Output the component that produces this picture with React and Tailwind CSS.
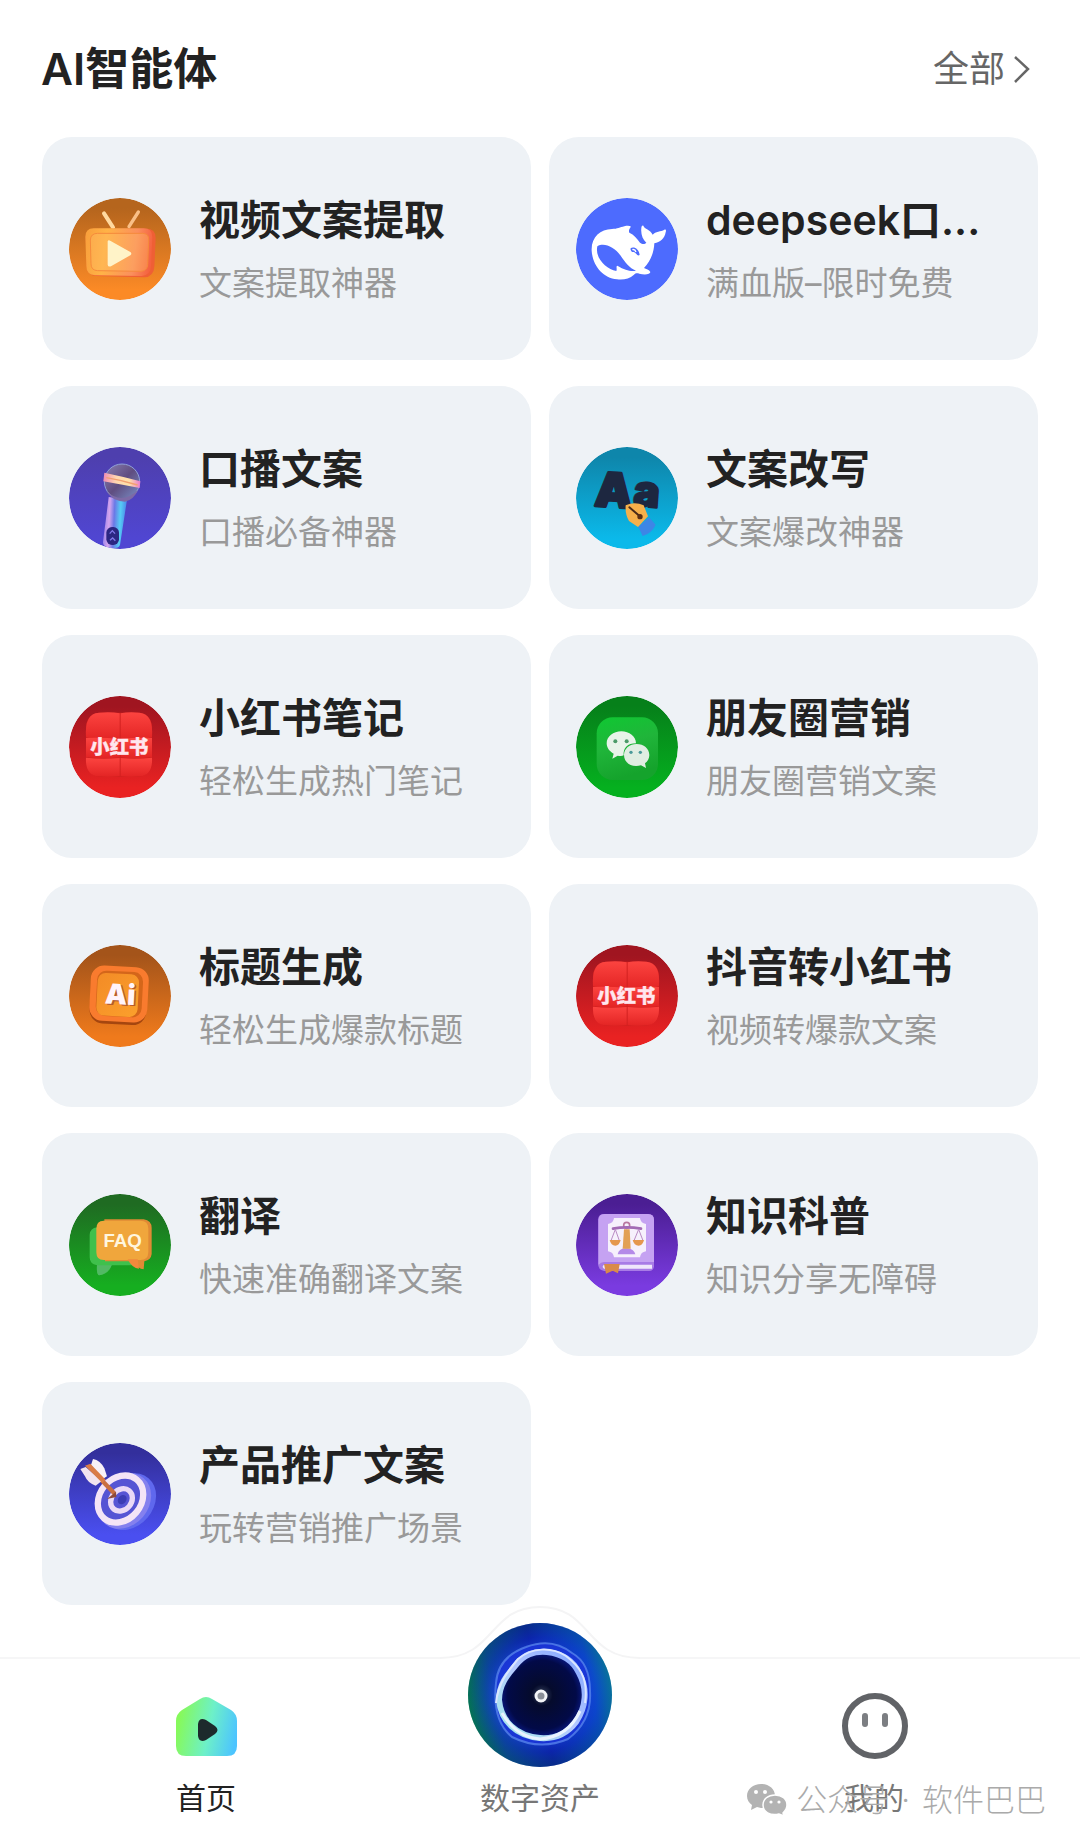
import React, { useState } from 'react';
import { clsx } from 'clsx';

// All agent icons share a 306 x 306 canvas clipped to a circle
function IconDisc({ id, from, to, children }) {
  return (
    <svg viewBox="0 0 306 306" className="w-[102px] h-[102px] shrink-0 rounded-full" aria-hidden="true">
      <defs>
        <linearGradient id={`${id}-bg`} x1="0" y1="0" x2="0" y2="1">
          <stop offset="0.1" stopColor={from} />
          <stop offset="0.9" stopColor={to} />
        </linearGradient>
      </defs>
      <circle cx="153" cy="153" r="153" fill={`url(#${id}-bg)`} />
      {children}
    </svg>
  );
}

function VideoIcon() {
  return (
    <IconDisc id="video" from="#b5651d" to="#fb8a26">
      <defs>
        <linearGradient id="video-tv" x1="0" y1="0.3" x2="1" y2="0.4">
          <stop offset="0" stopColor="#f9a03c" />
          <stop offset="0.3" stopColor="#ffb347" />
          <stop offset="0.75" stopColor="#fb8f5c" />
          <stop offset="1" stopColor="#f4623f" />
        </linearGradient>
      </defs>
      <path d="M105 46 L132 88" stroke="#ffd9a0" strokeWidth="12" strokeLinecap="round" />
      <path d="M208 42 L180 86" stroke="#f9bf86" strokeWidth="10" strokeLinecap="round" />
      <path d="M76 92 H232 Q260 92 260 120 L256 206 Q254 236 226 238 L82 234 Q54 232 53 206 L50 118 Q50 92 76 92Z" fill="#ef5f35" />
      <path d="M74 91 H224 Q250 91 250 118 L246 204 Q245 232 218 234 L78 232 Q52 230 52 204 L49 117 Q49 91 74 91Z" fill="url(#video-tv)" />
      <path d="M86 106 H220 Q240 106 239 126 L236 200 Q235 218 216 220 L86 218 Q66 217 66 198 L64 126 Q65 106 86 106Z" fill="#ffbe66" fillOpacity="0.35" stroke="#f58a3c" strokeWidth="3" />
      <path d="M116 130 Q118 124 125 129 L184 162 Q190 167 184 172 L126 205 Q117 208 116 200Z" fill="#fff3c8" />
    </IconDisc>
  );
}

function WhaleIcon() {
  return (
    <IconDisc id="whale" from="#4d6bfe" to="#4d6bfe">
      <path
        d="M47 158 C45 118 72 94 108 93 C124 93 132 88 145 85 C154 83 161 83 165 86 C160 92 157 98 160 104 C174 110 183 122 192 134 C199 140 207 139 211 134 C200 125 194 108 196 91 C196 85 199 81 202 83 C206 94 222 93 230 110 C238 100 255 101 265 95 C270 93 271 97 269 103 C266 122 252 133 235 136 C234 166 221 193 204 210 C210 214 220 215 223 222 C223 230 204 231 190 227 C183 225 179 225 174 230 C160 243 143 246 123 244 C80 240 50 203 47 158Z"
        fill="#fff"
      />
      <path
        d="M64 145 C84 133 114 146 134 173 C148 193 160 210 180 218 C164 221 148 217 124 203 C119 205 124 213 121 219 C91 214 56 180 64 145Z"
        fill="#4d6bfe"
      />
      <path d="M163 152 C171 144 189 151 191 171 C183 176 182 165 174 162 C170 162 166 164 163 152Z" fill="#4d6bfe" />
      <path d="M169 155 Q177 153 180 162" fill="none" stroke="#fff" strokeWidth="4" />
    </IconDisc>
  );
}

function MicIcon() {
  return (
    <IconDisc id="mic" from="#4e3fae" to="#5046d2">
      <defs>
        <linearGradient id="mic-handle" x1="0" y1="0" x2="1" y2="0.1">
          <stop offset="0" stopColor="#8a79e8" />
          <stop offset="0.3" stopColor="#d5a5ee" />
          <stop offset="0.5" stopColor="#6a78e6" />
          <stop offset="0.75" stopColor="#56cdf5" />
          <stop offset="1" stopColor="#4b86ea" />
        </linearGradient>
        <linearGradient id="mic-head" x1="0" y1="0" x2="1" y2="1">
          <stop offset="0" stopColor="#8a80b4" />
          <stop offset="0.5" stopColor="#5f4d80" />
          <stop offset="1" stopColor="#7a91c9" />
        </linearGradient>
        <linearGradient id="mic-band" x1="0" y1="0" x2="1" y2="0">
          <stop offset="0" stopColor="#f08cb4" />
          <stop offset="0.35" stopColor="#ffd7b0" />
          <stop offset="0.7" stopColor="#ffe1a8" />
          <stop offset="1" stopColor="#e87ad0" />
        </linearGradient>
      </defs>
      <path d="M119 150 L174 158 L153 294 Q148 306 124 303 Q101 299 102 286Z" fill="url(#mic-handle)" />
      <circle cx="159" cy="104" r="53" fill="url(#mic-head)" stroke="#8fa0d8" strokeWidth="3" />
      <path d="M112 132 Q158 175 207 129 Q195 158 168 164 Q128 162 112 132Z" fill="#7d6aa6" />
      <path d="M106 77 Q160 88 214 103 L212 123 Q158 113 103 103Z" fill="url(#mic-band)" />
      <path d="M112 92 Q160 100 206 114" fill="none" stroke="#f3a070" strokeWidth="4" />
      <rect x="112" y="240" width="38" height="54" rx="17" fill="#2b2682" />
      <path d="M122 260 L130 251 L138 260 M123 280 L131 273 L139 281" fill="none" stroke="#7f77e8" strokeWidth="4" />
    </IconDisc>
  );
}

function RewriteIcon() {
  return (
    <IconDisc id="rewrite" from="#0e86ab" to="#0bb9ea">
      <g fontFamily="Inter, sans-serif" fontWeight="900">
        <text x="50" y="177" fontSize="145" fill="#3f6f8b" transform="rotate(4 50 179)">A</text>
        <text x="54" y="176" fontSize="142" fill="#1d2740" stroke="#1d2740" strokeWidth="8" strokeLinejoin="round" transform="rotate(4 54 178)">A</text>
        <text x="166" y="176" fontSize="136" fill="#4b7f9a" transform="rotate(4 166 180)">a</text>
        <text x="170" y="177" fontSize="132" fill="#1d2740" stroke="#1d2740" strokeWidth="6" strokeLinejoin="round" transform="rotate(4 170 180)">a</text>
      </g>
      <path d="M187 240 L219 211 L239 233 Q227 259 200 267Z" fill="#3d86e6" />
      <path d="M149 175 Q176 163 203 175 L216 208 L186 240 L159 222 Q147 202 149 175Z" fill="#f6b04a" />
      <path d="M160 181 L188 205" stroke="#4a2b18" strokeWidth="6" strokeLinecap="round" />
      <circle cx="192" cy="209" r="8" fill="#5a2f14" />
    </IconDisc>
  );
}

function RedNoteIcon({ id }) {
  return (
    <IconDisc id={id} from="#a01520" to="#e92222">
      <defs>
        <linearGradient id={`${id}-pad`} x1="0" y1="0" x2="0" y2="1">
          <stop offset="0" stopColor="#fc4440" />
          <stop offset="1" stopColor="#e32424" />
        </linearGradient>
      </defs>
      <rect x="51" y="50" width="198" height="192" rx="42" fill="#d2201f" />
      <g fill={`url(#${id}-pad)`}>
        <path d="M90 50 Q125 46 152 52 V128 Q98 138 51 124 Q46 52 90 50Z" />
        <path d="M155 52 Q180 46 212 50 Q254 54 249 124 Q200 138 155 128Z" />
        <path d="M51 126 Q100 124 152 129 V184 Q100 190 51 183Z" />
        <path d="M155 129 Q200 124 249 126 V183 Q200 190 155 184Z" />
        <path d="M51 185 Q100 191 152 186 V240 Q120 244 88 241 Q48 238 51 185Z" />
        <path d="M155 186 Q200 191 249 185 Q252 238 212 241 Q180 244 155 240Z" />
      </g>
      <text x="151" y="174" textAnchor="middle" fontFamily="'Noto Sans CJK SC', sans-serif" fontWeight="900" fontSize="58" fill="#ffe6ee" stroke="#ffe6ee" strokeWidth="1">
        小红书
      </text>
    </IconDisc>
  );
}

function MomentsIcon() {
  return (
    <IconDisc id="moments" from="#06801a" to="#05b01f">
      <defs>
        <linearGradient id="moments-tile" x1="0" y1="0" x2="0.3" y2="1">
          <stop offset="0" stopColor="#0fc832" />
          <stop offset="0.5" stopColor="#20b53a" />
          <stop offset="1" stopColor="#15a32c" />
        </linearGradient>
      </defs>
      <rect x="62" y="64" width="184" height="188" rx="48" fill="url(#moments-tile)" />
      <path d="M136 106 C160 106 180 122 180 142 C155 142 141 156 143 178 C138 181 131 180 125 179 L109 188 L113 173 C100 166 92 155 92 142 C92 122 112 106 136 106Z" fill="#e8f3e9" />
      <path d="M182 144 C203 144 220 158 220 177 C220 187 215 196 207 202 L210 216 L195 208 C165 216 144 199 144 177 C144 158 161 144 182 144Z" fill="#e0ede2" />
      <circle cx="118" cy="136" r="6" fill="#4b9a68" />
      <circle cx="152" cy="136" r="6" fill="#4b9a68" />
      <circle cx="165" cy="169" r="5" fill="#4b9a9a" />
      <circle cx="193" cy="169" r="5" fill="#4b9a9a" />
    </IconDisc>
  );
}

function TitleIcon() {
  return (
    <IconDisc id="title" from="#a4541a" to="#ef7a1c">
      <defs>
        <linearGradient id="title-face" x1="0" y1="0" x2="1" y2="1">
          <stop offset="0" stopColor="#f38b26" />
          <stop offset="1" stopColor="#fba02c" />
        </linearGradient>
      </defs>
      <rect x="64" y="70" width="170" height="168" rx="40" fill="#a5460f" transform="rotate(3 150 150)" />
      <rect x="63" y="64" width="174" height="166" rx="40" fill="#f97b2e" transform="rotate(3 150 150)" />
      <rect x="82" y="79" width="138" height="136" rx="28" fill="#d4661a" transform="rotate(3 150 150)" />
      <rect x="84" y="86" width="124" height="128" rx="24" fill="url(#title-face)" transform="rotate(3 150 150)" />
      <g fontFamily="Inter, sans-serif" fontWeight="900" fontSize="84" transform="rotate(3 150 150)">
        <text x="113" y="181" fill="#b65a2d">Ai</text>
        <text x="108" y="178" fill="#fff4fa">Ai</text>
      </g>
    </IconDisc>
  );
}

function FaqIcon() {
  return (
    <IconDisc id="faq" from="#1f6b22" to="#16ae20">
      <path d="M84 100 H190 V214 H128 Q120 240 90 244 Q82 240 84 214 Q62 210 62 190 V122 Q64 102 84 100Z" fill="#3fc04c" />
      <path d="M84 214 L128 214 Q118 238 90 244 Q82 240 84 214Z" fill="#52b964" />
      <path d="M106 76 H224 Q248 80 248 102 V180 Q246 198 226 202 L224 226 Q206 226 196 202 H108Z" fill="#e08a35" />
      <path d="M104 80 H214 Q238 80 238 104 V174 Q238 198 214 198 H104 Q82 198 82 174 V104 Q82 80 104 80Z" fill="#f0a63c" />
      <path d="M176 196 H206 L210 224 Q190 224 176 196Z" fill="#f0893c" />
      <text x="161" y="158" textAnchor="middle" fontFamily="'Liberation Sans', sans-serif" fontWeight="700" fontSize="56" fill="#fff6df">FAQ</text>
    </IconDisc>
  );
}

function BookIcon() {
  return (
    <IconDisc id="book" from="#4b1e93" to="#7a3be0">
      <path d="M66 200 V76 Q68 60 84 60 H216 Q234 60 234 78 V218 Q232 230 220 231 H84 Q66 228 66 208Z" fill="#a87be6" />
      <path d="M84 212 H228 V224 H84 Q76 218 84 212Z" fill="#efe6fb" />
      <path d="M68 200 V78 Q68 60 86 60 H216 Q234 60 234 78 V204 H84 Q74 204 68 212Z" fill="#c5a2f2" />
      <path d="M114 72 H192 Q194 88 210 90 V172 Q194 174 192 190 H114 Q112 174 96 172 V90 Q112 88 114 72Z" fill="#f6f0fc" />
      <path d="M125 181 Q128 164 148 163 H156 Q174 166 178 181Z" fill="#b48ae8" />
      <path d="M144 106 H161 L164 164 H140Z" fill="#e2a056" />
      <circle cx="152" cy="94" r="9" fill="none" stroke="#b877a0" strokeWidth="5" />
      <path d="M111 104 Q152 96 195 104" fill="none" stroke="#a36bb5" strokeWidth="8" strokeLinecap="round" />
      <path d="M118 106 L105 140 M118 106 L130 140 M188 106 L174 140 M188 106 L201 140" stroke="#b98bc4" strokeWidth="3" />
      <path d="M101 138 H134 Q130 155 118 155 Q105 155 101 138Z M170 138 H204 Q200 155 188 155 Q174 155 170 138Z" fill="#e5974e" />
      <path d="M84 210 H131 L126 238 L110 230 L90 239Z" fill="#d98a4a" />
    </IconDisc>
  );
}

function TargetIcon() {
  return (
    <IconDisc id="target" from="#332f9c" to="#4a4ff0">
      <g transform="rotate(-50 166 170)">
        <ellipse cx="170" cy="184" rx="92" ry="74" fill="#5f68ee" />
        <ellipse cx="163" cy="172" rx="90" ry="74" fill="#8480ee" />
        <ellipse cx="160" cy="160" rx="76" ry="62" fill="#5654d4" stroke="#f4e4f6" strokeWidth="19" />
        <ellipse cx="160" cy="164" rx="36" ry="30" fill="#5654d4" stroke="#ead9f6" strokeWidth="16" />
        <ellipse cx="162" cy="165" rx="15" ry="12" fill="#3b3cb4" />
      </g>
      <path d="M98 112 L137 152" stroke="#c96f42" strokeWidth="13" />
      <path d="M114 168 L141 146 L142 162Z" fill="#8f4b3c" />
      <path d="M66 66 L72 48 Q94 52 106 76 L114 100 L98 110Z" fill="#f8f1f8" />
      <path d="M34 78 L50 72 L98 114 L80 128 Q56 120 48 100Z" fill="#f1e4f0" />
      <path d="M48 68 L64 62 L110 110 L100 120Z" fill="#d97c48" />
    </IconDisc>
  );
}

const AGENTS = [
  { title: '视频文案提取', desc: '文案提取神器', icon: <VideoIcon /> },
  { title: 'deepseek口...', desc: '满血版–限时免费', icon: <WhaleIcon /> },
  { title: '口播文案', desc: '口播必备神器', icon: <MicIcon /> },
  { title: '文案改写', desc: '文案爆改神器', icon: <RewriteIcon /> },
  { title: '小红书笔记', desc: '轻松生成热门笔记', icon: <RedNoteIcon id="note" /> },
  { title: '朋友圈营销', desc: '朋友圈营销文案', icon: <MomentsIcon /> },
  { title: '标题生成', desc: '轻松生成爆款标题', icon: <TitleIcon /> },
  { title: '抖音转小红书', desc: '视频转爆款文案', icon: <RedNoteIcon id="convert" /> },
  { title: '翻译', desc: '快速准确翻译文案', icon: <FaqIcon /> },
  { title: '知识科普', desc: '知识分享无障碍', icon: <BookIcon /> },
  { title: '产品推广文案', desc: '玩转营销推广场景', icon: <TargetIcon /> },
];

function AgentCard({ title, desc, icon }) {
  return (
    <button type="button" className="flex items-center gap-7 h-[223px] px-[27px] rounded-[30px] bg-[#eef2f6] text-left">
      {icon}
      <span className="flex flex-col gap-2 min-w-0">
        <span className="text-[41px] leading-[60px] font-semibold text-[#222222] whitespace-nowrap">{title}</span>
        <span className="text-[33px] leading-[50px] text-[#999999] whitespace-nowrap">{desc}</span>
      </span>
    </button>
  );
}

function HomeIcon() {
  return (
    <svg viewBox="0 0 68 68" className="w-[68px] h-[68px]" aria-hidden="true">
      <defs>
        <linearGradient id="home-fill" x1="0" y1="0.4" x2="1" y2="0.6">
          <stop offset="0.05" stopColor="#86f95c" />
          <stop offset="0.55" stopColor="#6df0c8" />
          <stop offset="1" stopColor="#4cc4ff" />
        </linearGradient>
      </defs>
      <path d="M28 7 Q34 3 40 7 L59 18 Q65 22 65 29 V54 Q65 64 55 64 H14 Q4 64 4 54 V29 Q4 22 10 18Z" fill="url(#home-fill)" />
      <path d="M26 32 Q27 25 34 28 L43 34 Q48 38 43 42 L34 48 Q27 51 26 44Z" fill="#1d2a2c" />
    </svg>
  );
}

function OrbIcon() {
  return (
    <svg viewBox="0 0 144 144" className="w-36 h-36" aria-hidden="true">
      <defs>
        <linearGradient id="orb-rim" x1="0" y1="0.6" x2="1" y2="0.4">
          <stop offset="0" stopColor="#04904a" />
          <stop offset="0.2" stopColor="#0a4f92" />
          <stop offset="0.5" stopColor="#0a1fa0" />
          <stop offset="0.85" stopColor="#0a55d8" />
          <stop offset="1" stopColor="#0a90b8" />
        </linearGradient>
        <radialGradient id="orb-shade">
          <stop offset="0.55" stopColor="#1f48ee" stopOpacity="0.9" />
          <stop offset="0.8" stopColor="#0e2dba" stopOpacity="0.4" />
          <stop offset="1" stopColor="#04405e" stopOpacity="0.35" />
        </radialGradient>
        <radialGradient id="orb-core">
          <stop offset="0" stopColor="#3a4560" />
          <stop offset="0.25" stopColor="#050b2c" />
          <stop offset="0.8" stopColor="#020a48" />
          <stop offset="1" stopColor="#0a1a86" />
        </radialGradient>
        <linearGradient id="orb-ring" x1="0" y1="1" x2="1" y2="0">
          <stop offset="0" stopColor="#a4eee8" />
          <stop offset="0.5" stopColor="#b4c8ff" />
          <stop offset="1" stopColor="#7fa4ff" />
        </linearGradient>
      </defs>
      <circle cx="72" cy="72" r="72" fill="url(#orb-rim)" />
      <circle cx="72" cy="72" r="72" fill="url(#orb-shade)" />
      <path d="M28 60 Q30 34 58 24 Q84 14 104 30 Q122 40 122 68 Q124 98 100 116 Q72 128 44 114 Q24 98 28 60Z" fill="#1c34d8" fillOpacity="0.8" stroke="#5f8df0" strokeOpacity="0.7" strokeWidth="2" />
      <path d="M31 77 C31 62 39 52 47 43 C56 31 66 28 79 29 C96 31 106 39 111 50 C120 66 118 84 108 99 C99 111 86 116 72 115 C48 113 33 98 31 77Z" fill="url(#orb-core)" stroke="url(#orb-ring)" strokeWidth="6" />
      <path d="M28 80 C30 60 40 48 50 36 C64 24 84 24 98 33 C110 42 121 54 117 80" fill="none" stroke="#dbe6ff" strokeWidth="2" />
      <path d="M34 90 Q48 114 72 116 Q100 114 112 88" fill="none" stroke="#eaf4ff" strokeWidth="3" />
      <circle cx="73" cy="73" r="5" fill="#8a8f98" stroke="#f3f5f8" strokeWidth="3" />
    </svg>
  );
}

function FaceIcon() {
  return (
    <svg viewBox="0 0 68 68" className="w-[68px] h-[68px]" fill="none" aria-hidden="true">
      <circle cx="35" cy="34" r="30" stroke="#616367" strokeWidth="6" />
      <path d="M25 24 V32 M45 24 V32" stroke="#7c7e82" strokeWidth="6" strokeLinecap="round" />
    </svg>
  );
}

function WechatMark() {
  return (
    <svg viewBox="0 0 42 34" className="w-[42px] h-[34px]" aria-hidden="true">
      <path d="M15 1 C23 1 29 6 29 13 C29 20 23 25 15 25 L11 24 L5 27 L6 22 C3 20 1 17 1 13 C1 6 7 1 15 1Z" fill="#b3b3b3" />
      <path d="M29 12 C36 12 41 16 41 22 C41 25 39 28 37 30 L38 33 L33 31 C24 33 17 29 17 22 C17 16 22 12 29 12Z" fill="#b3b3b3" stroke="#fff" strokeWidth="1.5" />
      <circle cx="10" cy="9" r="2" fill="#fff" />
      <circle cx="19" cy="9" r="2" fill="#fff" />
      <circle cx="25" cy="19" r="1.6" fill="#fff" />
      <circle cx="33" cy="19" r="1.6" fill="#fff" />
    </svg>
  );
}

const TABS = [
  { key: 'home', label: '首页', icon: <HomeIcon /> },
  { key: 'assets', label: '数字资产', icon: <OrbIcon />, raised: true },
  { key: 'mine', label: '我的', icon: <FaceIcon /> },
];

function TabBar() {
  const [active, setActive] = useState('home');

  return (
    <nav className="relative">
      {/* hairline with the bump above the middle tab */}
      <div className="absolute inset-x-0 top-0 flex items-end" aria-hidden="true">
        <div className="flex-1 border-t-2 border-[#f6f6f7]" />
        <svg viewBox="0 0 200 54" className="w-[200px] h-[54px]" fill="none">
          <path d="M0 53 C56 53 48 2 100 2 C152 2 144 53 200 53" stroke="#f4f4f5" strokeWidth="2" />
        </svg>
        <div className="flex-1 border-t-2 border-[#f6f6f7]" />
      </div>

      <div className="relative grid grid-cols-3 items-end px-[39px] pt-[18px] pb-[26px]">
        {TABS.map((tab) => (
          <button
            key={tab.key}
            type="button"
            onClick={() => setActive(tab.key)}
            className={clsx('flex flex-col items-center', tab.raised ? 'gap-[13px]' : 'gap-5')}
          >
            {tab.icon}
            <span className={clsx('text-[30px] leading-9', active === tab.key ? 'text-[#222222]' : 'text-[#777777]')}>
              {tab.label}
            </span>
          </button>
        ))}
      </div>

      <div className="absolute right-[34px] bottom-[22px] flex items-center gap-2 text-[#aaaaaa] pointer-events-none">
        <WechatMark />
        <span className="flex gap-3 text-[31px] leading-10 font-light whitespace-nowrap">
          <span>公众号</span>
          <span>·</span>
          <span>软件巴巴</span>
        </span>
      </div>
    </nav>
  );
}

export default function App() {
  return (
    <div className="min-h-screen bg-white font-[Inter,'Noto_Sans_CJK_SC',sans-serif]">
      <header className="flex items-center justify-between h-[137px] pl-[41px] pr-[49px]">
        <h1 className="text-[44px] leading-[60px] font-semibold text-[#222222]">AI智能体</h1>
        <a href="#all" className="flex items-center gap-2 text-[36px] leading-[60px] text-[#666666]">
          全部
          <svg viewBox="0 0 18 30" className="w-[18px] h-[30px]" fill="none" aria-hidden="true">
            <path d="M2 3 L15 15 L2 28" stroke="#666666" strokeWidth="2.5" />
          </svg>
        </a>
      </header>

      <main className="grid grid-cols-2 gap-x-[18px] gap-y-[26px] px-[42px]">
        {AGENTS.map((agent) => (
          <AgentCard key={agent.title} {...agent} />
        ))}
      </main>

      <TabBar />
    </div>
  );
}
